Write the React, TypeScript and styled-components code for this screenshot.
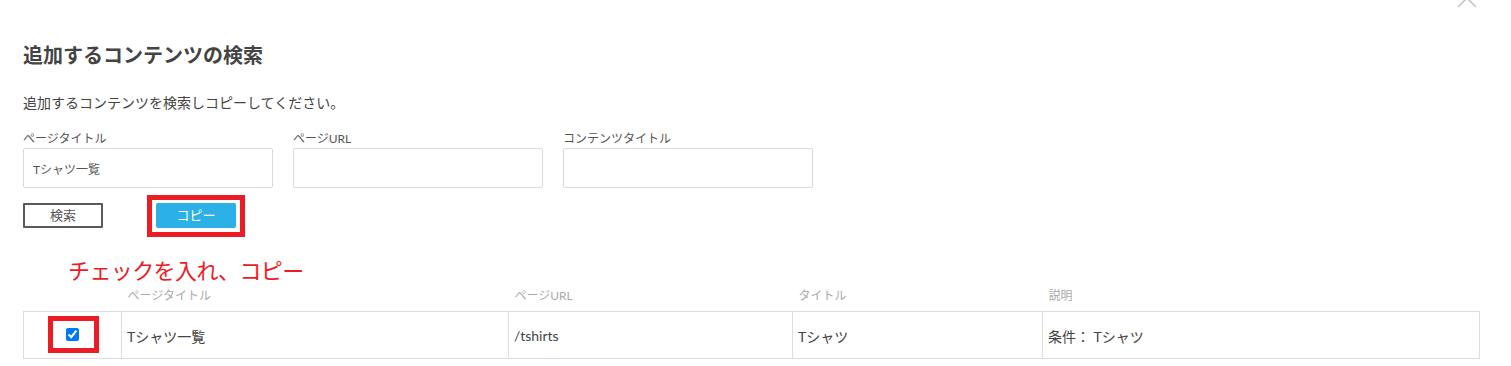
import React from "react";
import styled, { createGlobalStyle } from "styled-components";

const GlobalStyle = createGlobalStyle`
    html, body {
        margin: 0;
        background: #fff;
    }
    body {
        font-family: Lato, "Noto Sans CJK JP", sans-serif;
        color: #444;
    }
`;

const Modal = styled.div`
    position: relative;
    padding: 40px 31px 0 23px;
    min-height: 366px;
    box-sizing: border-box;
    overflow: hidden;
`;

const Close = styled.button`
    position: absolute;
    top: -12px;
    right: 34px;
    width: 20px;
    height: 20px;
    padding: 0;
    border: 0;
    background: none;
    & svg {
        display: block;
    }
`;

const Title = styled.h2`
    margin: 0;
    font-size: 20px;
    line-height: 30px;
    font-weight: bold;
    color: #444;
`;

const Lead = styled.p`
    margin: 22px 0 0;
    font-size: 14px;
    line-height: 21px;
    color: #444;
`;

const Fields = styled.div`
    display: flex;
    gap: 20px;
    margin-top: 17px;
`;

const Field = styled.label`
    display: flex;
    flex-direction: column;
    width: 250px;
`;

const FieldLabel = styled.span`
    font-size: 12px;
    line-height: 18px;
    color: #555;
`;

const Input = styled.input`
    box-sizing: border-box;
    height: 40px;
    margin: 0;
    padding: 0 9px;
    border: 1px solid #d9d9d9;
    border-radius: 2px;
    font-family: inherit;
    font-size: 12px;
    color: #555;
    outline: none;
`;

const Actions = styled.div`
    display: flex;
    gap: 53px;
    margin-top: 15px;
`;

const Button = styled.button<{ $primary?: boolean }>`
    box-sizing: border-box;
    width: 80px;
    height: 25px;
    margin: 0;
    padding: 0;
    font-family: inherit;
    font-size: 13px;
    line-height: 1;
    border-radius: ${(p) => (p.$primary ? "2px" : "1px")};
    border: ${(p) => (p.$primary ? "none" : "2px solid #5a5a5a")};
    background: ${(p) => (p.$primary ? "#2bb1e6" : "#fff")};
    color: ${(p) => (p.$primary ? "#fff" : "#555")};
`;

/* red annotation frame drawn over the screenshot */
const Marked = styled.span<{ $t: number; $r: number; $b: number; $l: number }>`
    position: relative;
    display: inline-flex;
    &::after {
        content: "";
        position: absolute;
        top: -${(p) => p.$t}px;
        right: -${(p) => p.$r}px;
        bottom: -${(p) => p.$b}px;
        left: -${(p) => p.$l}px;
        border: 5px solid #ec1c24;
        pointer-events: none;
    }
`;

const Note = styled.div`
    margin: 26px 0 0 45px;
    font-size: 22px;
    line-height: 33px;
    font-weight: normal;
    color: #ec1c24;
    letter-spacing: -0.6px;
`;

const Table = styled.table`
    width: 1457px;
    border-collapse: collapse;
    table-layout: fixed;
`;

const Th = styled.th`
    padding: 0 6px 6px;
    text-align: left;
    font-size: 12px;
    line-height: 18px;
    font-weight: normal;
    color: #aaa;
`;

const Td = styled.td<{ $center?: boolean }>`
    height: 45px;
    padding: 1px 5px 0;
    border: 1px solid #ddd;
    font-size: 14px;
    color: #444;
    text-align: ${(p) => (p.$center ? "center" : "left")};
    vertical-align: middle;
`;

const Check = styled.input`
    width: 13px;
    height: 13px;
    margin: 0;
    display: block;
`;

const App: React.FC = () => {
    return (
        <>
            <GlobalStyle />
            <Modal>
                <Close aria-label="close">
                    <svg width="20" height="20" viewBox="0 0 20 20">
                        <path d="M1 1L19 19M19 1L1 19" stroke="#c4c4c4" strokeWidth="1.6" fill="none" />
                    </svg>
                </Close>
                <Title>追加するコンテンツの検索</Title>
                <Lead>追加するコンテンツを検索しコピーしてください。</Lead>
                <Fields>
                    <Field>
                        <FieldLabel>ページタイトル</FieldLabel>
                        <Input defaultValue="Tシャツ一覧" />
                    </Field>
                    <Field>
                        <FieldLabel>ページURL</FieldLabel>
                        <Input />
                    </Field>
                    <Field>
                        <FieldLabel>コンテンツタイトル</FieldLabel>
                        <Input />
                    </Field>
                </Fields>
                <Actions>
                    <Button>検索</Button>
                    <Marked $t={8} $r={9} $b={9} $l={9}>
                        <Button $primary>コピー</Button>
                    </Marked>
                </Actions>
                <Note>チェックを入れ、コピー</Note>
                <Table>
                    <colgroup>
                        <col style={{ width: 98 }} />
                        <col style={{ width: 387 }} />
                        <col style={{ width: 284 }} />
                        <col style={{ width: 250 }} />
                        <col />
                    </colgroup>
                    <thead>
                        <tr>
                            <Th />
                            <Th>ページタイトル</Th>
                            <Th>ページURL</Th>
                            <Th>タイトル</Th>
                            <Th>説明</Th>
                        </tr>
                    </thead>
                    <tbody>
                        <tr>
                            <Td $center>
                                <Marked $t={12} $r={20} $b={12} $l={18}>
                                    <Check type="checkbox" defaultChecked />
                                </Marked>
                            </Td>
                            <Td>Tシャツ一覧</Td>
                            <Td>/tshirts</Td>
                            <Td>Tシャツ</Td>
                            <Td>条件： Tシャツ</Td>
                        </tr>
                    </tbody>
                </Table>
            </Modal>
        </>
    );
};

export default App;
